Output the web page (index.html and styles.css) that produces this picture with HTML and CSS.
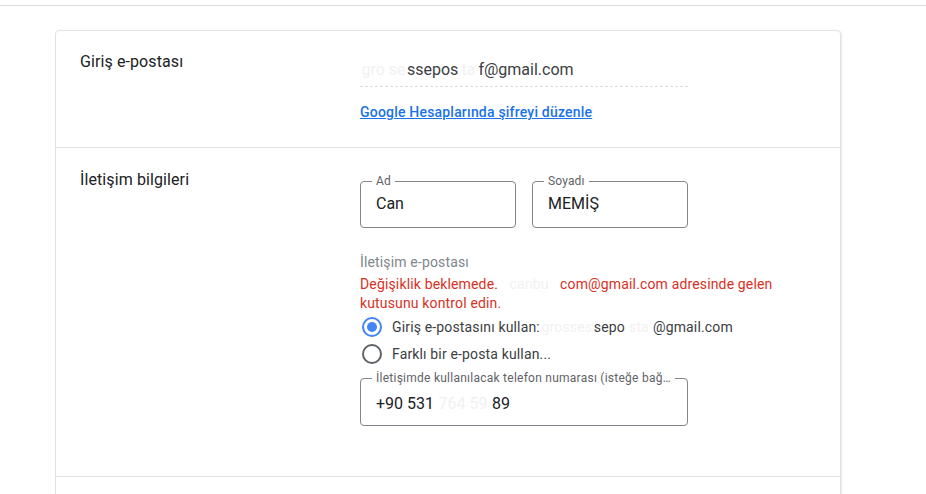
FILE: index.html
```html
<!DOCTYPE html>
<html lang="tr">
<head>
<meta charset="utf-8">
<title>Hesap</title>
<link rel="stylesheet" href="styles.css">
</head>
<body>
<div class="topbar"></div>
<main class="card">
  <section class="section s1">
    <div class="label">Giriş e-postası</div>
    <div class="content">
      <div class="email-line"><span class="faint w47">gro se</span>ssepos<span class="faint w20">ta</span>f@gmail.com</div>
      <a class="link" href="#">Google Hesaplarında şifreyi düzenle</a>
    </div>
  </section>
  <section class="section s2">
    <div class="label">İletişim bilgileri</div>
    <div class="content">
      <div class="name-row">
        <div class="field name-field">
          <span class="field-label">Ad</span>
          <span class="field-value">Can</span>
        </div>
        <div class="field name-field">
          <span class="field-label">Soyadı</span>
          <span class="field-value">MEMİŞ</span>
        </div>
      </div>
      <div class="sub-label">İletişim e-postası</div>
      <div class="error">
        <span class="error-line">Değişiklik beklemede.<span class="faint w62">canbu</span>com@gmail.com adresinde gelen</span>
        <span class="error-line">kutusunu kontrol edin.</span>
      </div>
      <div class="radio-row">
        <span class="radio checked"></span>
        <span class="radio-text">Giriş e-postasını kullan:<span class="faint w54">grosses</span>sepo<span class="faint w28">sta</span>@gmail.com</span>
      </div>
      <div class="radio-row">
        <span class="radio"></span>
        <span class="radio-text">Farklı bir e-posta kullan...</span>
      </div>
      <div class="field phone-field">
        <span class="field-label phone-label">İletişimde kullanılacak telefon numarası (isteğe bağ…</span>
        <span class="field-value">+90 531<span class="faint w58">764 59</span>89</span>
      </div>
    </div>
  </section>
  <section class="section s3"></section>
</main>
</body>
</html>
```

FILE: styles.css
```css
html { overflow: hidden; }
body {
  margin: 0;
  background: #fff;
  font-family: Roboto, "Noto Sans", Arial, sans-serif;
  color: #202124;
}
.topbar {
  height: 5px;
  border-bottom: 1px solid #dadce0;
}
.card {
  margin: 24px 0 0 55px;
  width: 786px;
  box-sizing: border-box;
  border: 1px solid #e2e2e2;
  border-radius: 4px 4px 0 0;
  box-shadow: 1px 1px 2px rgba(60, 64, 67, 0.12);
}
.section {
  display: flex;
  padding: 0 24px;
  border-bottom: 1px solid #e0e0e0;
}
.s1 { padding-top: 19px; padding-bottom: 25px; }
.s2 { padding-top: 20px; padding-bottom: 50px; }
.s3 { border-bottom: none; height: 40px; }
.label {
  width: 280px;
  flex: none;
  font-size: 16px;
  line-height: 24px;
  letter-spacing: 0.1px;
  color: #202124;
}
.content {
  flex: 1;
  min-width: 0;
}
.faint {
  display: inline-block;
  overflow: hidden;
  white-space: nowrap;
  vertical-align: top;
  text-align: center;
  color: #f1f1f1;
}
.w20 { width: 20px; }
.w28 { width: 28px; }
.w47 { width: 47px; }
.w54 { width: 54px; }
.w58 { width: 58px; }
.w62 { width: 62px; }
.email-line {
  margin-top: 8px;
  width: 328px;
  font-size: 16px;
  line-height: 24px;
  padding-bottom: 4px;
  border-bottom: 1px dashed #dadce0;
  color: #3c4043;
}
.link {
  display: inline-block;
  margin-top: 15px;
  font-size: 14px;
  line-height: 20px;
  font-weight: 500;
  letter-spacing: 0.2px;
  color: #1a73e8;
  text-decoration: underline;
}
.name-row {
  display: flex;
  gap: 16px;
  margin-top: 13px;
}
.field {
  position: relative;
  box-sizing: border-box;
  border: 1px solid #80868b;
  border-radius: 4px;
  padding: 0 15px;
}
.name-field {
  width: 156px;
  height: 47px;
  padding-top: 10px;
}
.phone-field {
  width: 328px;
  height: 48px;
  margin-top: 11px;
  padding-top: 13px;
}
.field-label {
  position: absolute;
  top: -9px;
  left: 11px;
  padding: 0 4px;
  background: #fff;
  font-size: 12px;
  line-height: 16px;
  letter-spacing: 0.15px;
  color: #5f6368;
  white-space: nowrap;
}
.phone-label {
  letter-spacing: 0.25px;
}
.field-value {
  display: block;
  font-size: 16px;
  line-height: 24px;
  color: #202124;
  white-space: nowrap;
}
.sub-label {
  margin-top: 24px;
  font-size: 14px;
  line-height: 20px;
  letter-spacing: 0.15px;
  color: #80868b;
}
.error {
  margin-top: 3px;
  font-size: 14px;
  line-height: 19px;
  letter-spacing: 0.15px;
  color: #d93025;
}
.error-line {
  display: block;
  white-space: nowrap;
}
.radio-row {
  display: flex;
  align-items: center;
  gap: 10px;
  height: 27px;
}
.radio-row:first-of-type { margin-top: 1px; }
.radio {
  flex: none;
  width: 20px;
  height: 20px;
  margin-left: 2px;
  box-sizing: border-box;
  border: 2px solid #5f6368;
  border-radius: 50%;
  position: relative;
}
.radio.checked {
  border-color: #4285f4;
}
.radio.checked::after {
  content: "";
  position: absolute;
  left: 3px;
  top: 3px;
  width: 10px;
  height: 10px;
  border-radius: 50%;
  background: #4285f4;
}
.radio-text {
  font-size: 14px;
  line-height: 20px;
  letter-spacing: 0.15px;
  color: #3c4043;
  white-space: nowrap;
}
```
